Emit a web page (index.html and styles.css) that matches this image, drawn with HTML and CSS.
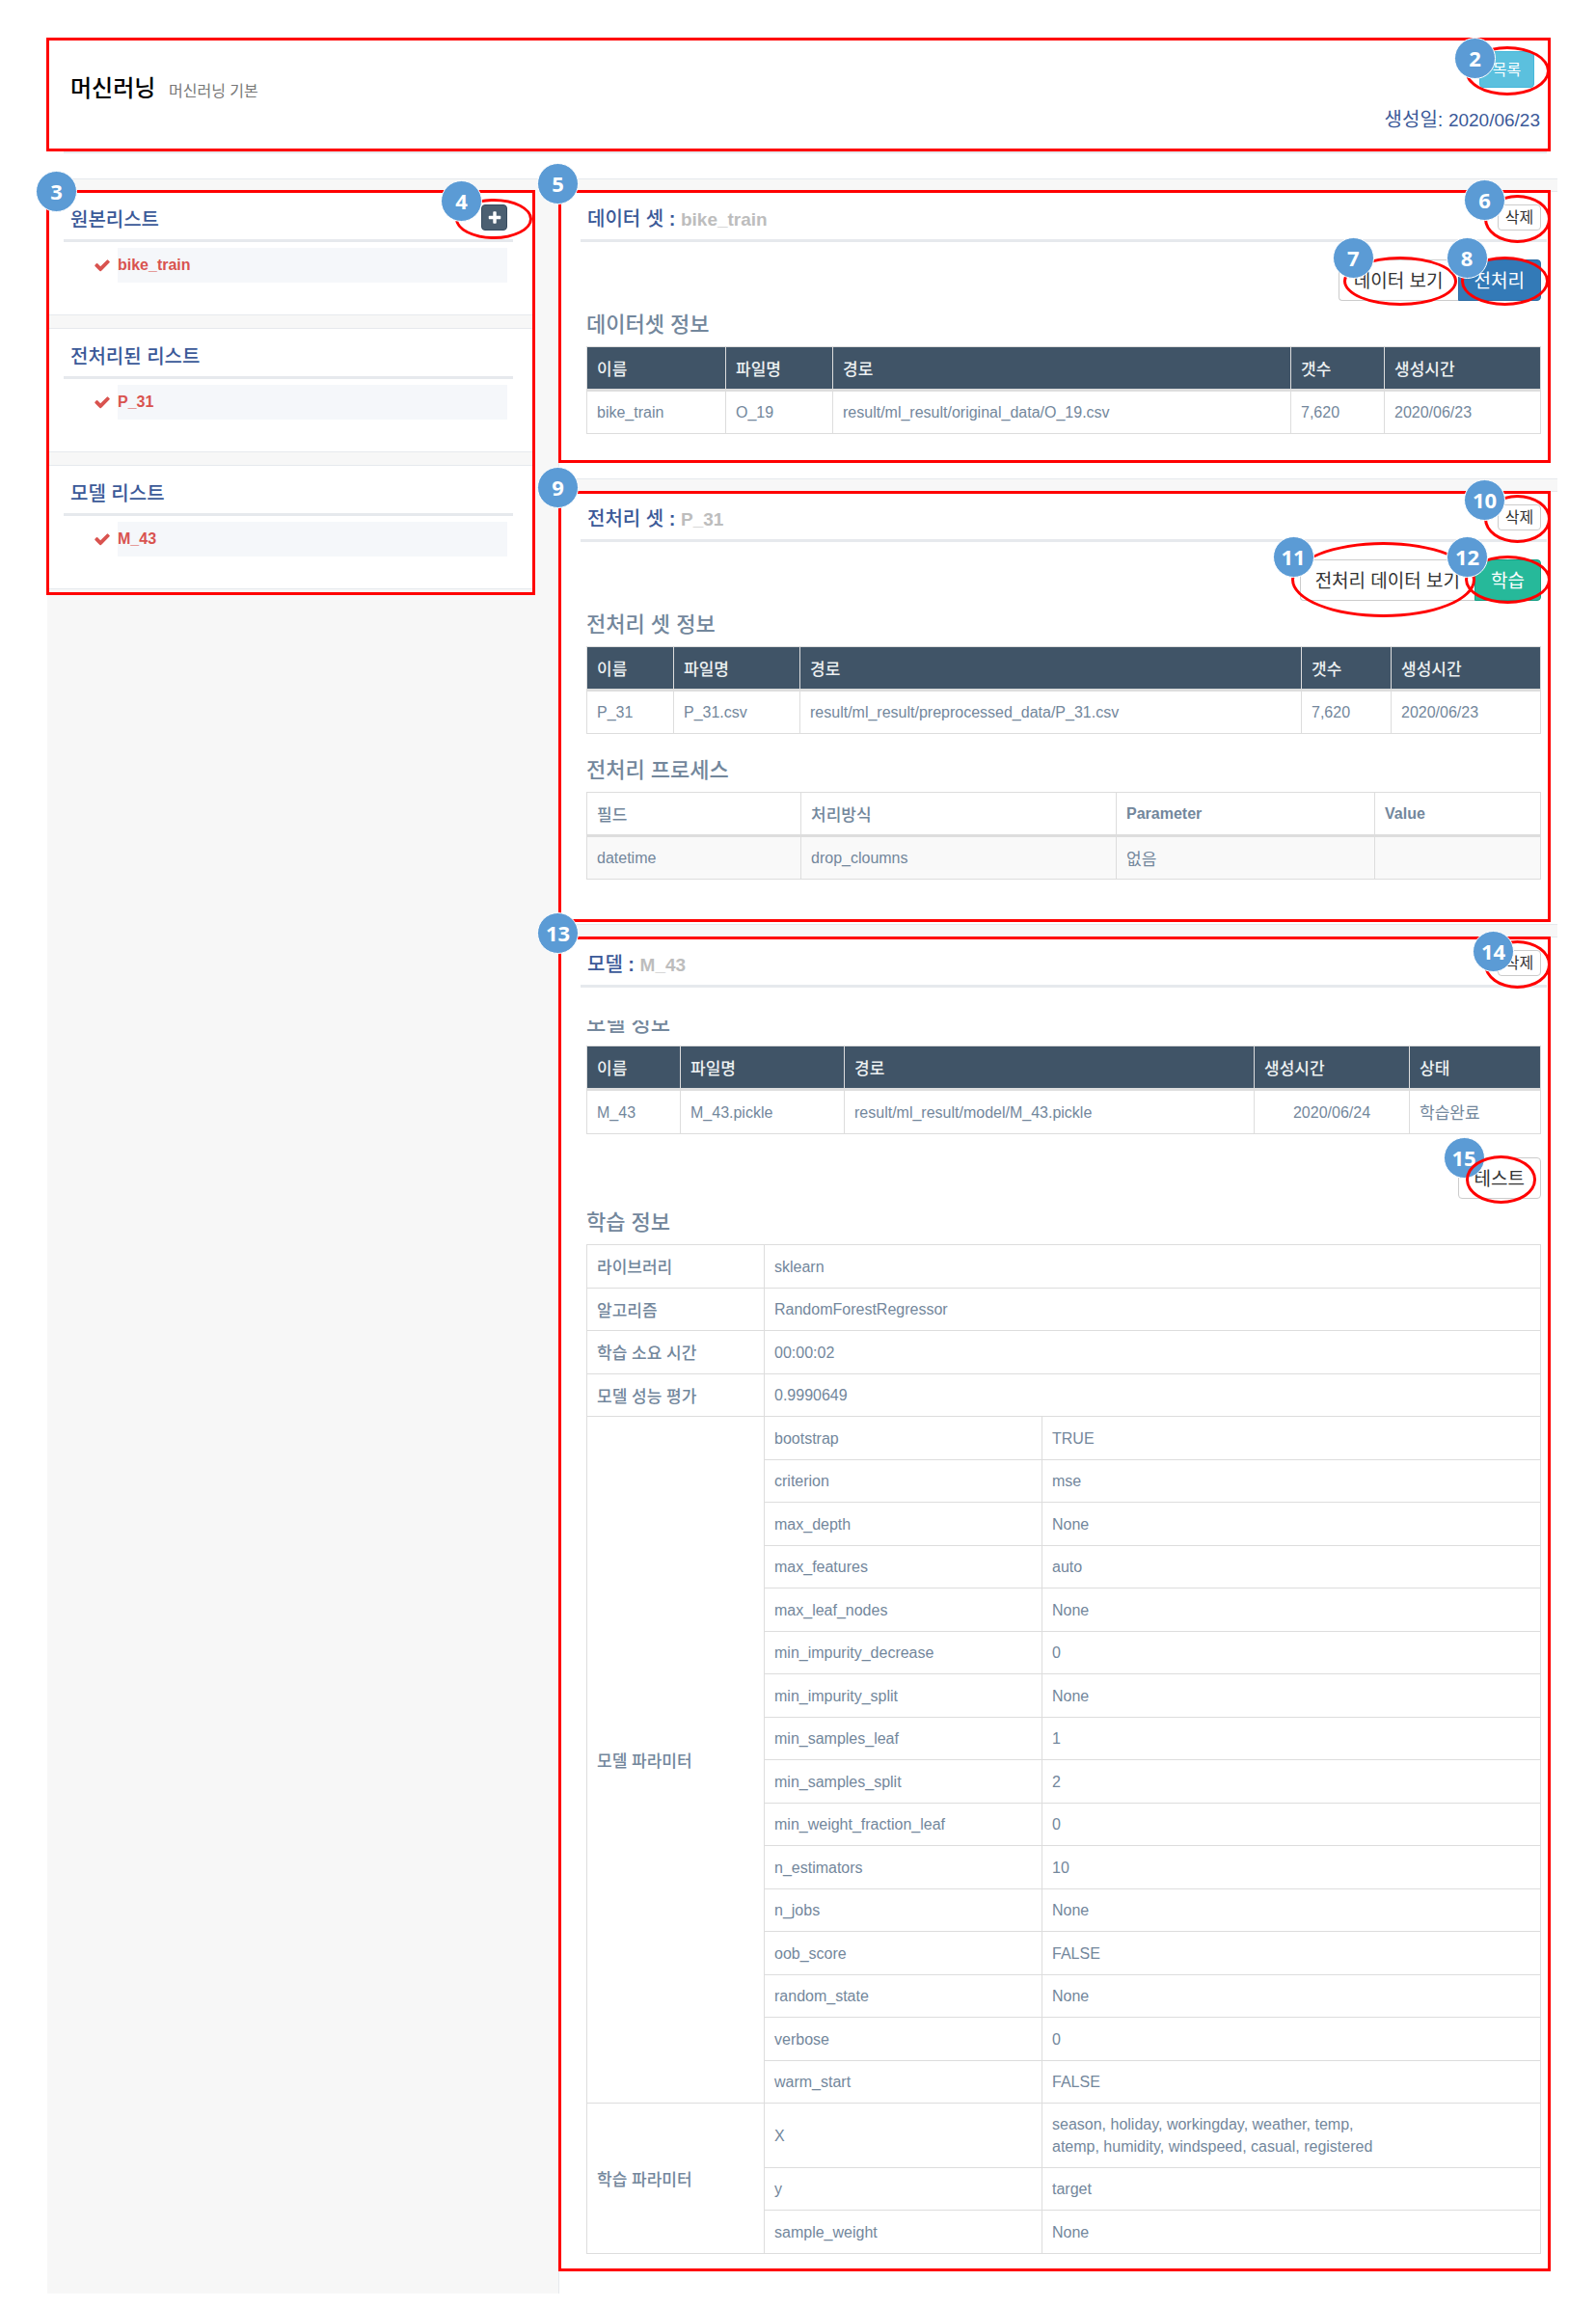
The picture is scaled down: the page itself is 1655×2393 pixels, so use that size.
FILE: index.html
```html
<!DOCTYPE html>
<html lang="ko">
<head>
<meta charset="utf-8">
<meta name="viewport" content="width=device-width, initial-scale=1">
<title>머신러닝</title>
<link rel="stylesheet" href="styles.css">
</head>
<body>
<div class="page">
  <header class="page-header">
    <div class="frame frame-header"></div>
    <div class="header-row">
      <h1 class="page-title">머신러닝 <small>머신러닝 기본</small></h1>
      <div class="header-side">
        <span class="mark mark-list">
          <button type="button" class="btn btn-info">목록</button>
          <span class="ring"></span><span class="badge">2</span>
        </span>
        <p class="created">생성일: <span class="created-date">2020/06/23</span></p>
      </div>
    </div>
  </header>

  <div class="columns">
    <aside class="sidebar">
      <div class="frame frame-sidebar"></div>
      <span class="badge badge-sidebar">3</span>
      <section class="panel side-panel">
        <div class="panel-head">
          <h2>원본리스트</h2>
          <span class="mark mark-add">
            <button type="button" class="btn btn-dark" aria-label="추가"><svg width="16" height="16" viewBox="0 0 1792 1792"><path fill="currentColor" d="M1600 736v192q0 40-28 68t-68 28h-416v416q0 40-28 68t-68 28h-192q-40 0-68-28t-28-68v-416h-416q-40 0-68-28t-28-68v-192q0-40 28-68t68-28h416v-416q0-40 28-68t68-28h192q40 0 68 28t28 68v416h416q40 0 68 28t28 68z"/></svg></button>
            <span class="ring"></span><span class="badge">4</span>
          </span>
        </div>
        <ul class="side-list">
          <li><svg width="18" height="18" viewBox="0 0 1792 1792"><path fill="currentColor" d="M1671 566q0 40-28 68l-724 724-136 136q-28 28-68 28t-68-28l-136-136-362-362q-28-28-28-68t28-68l136-136q28-28 68-28t68 28l294 295 656-657q28-28 68-28t68 28l136 136q28 28 28 68z"/></svg><a href="#dataset">bike_train</a></li>
        </ul>
      </section>
      <section class="panel side-panel">
        <div class="panel-head"><h2>전처리된 리스트</h2></div>
        <ul class="side-list">
          <li><svg width="18" height="18" viewBox="0 0 1792 1792"><path fill="currentColor" d="M1671 566q0 40-28 68l-724 724-136 136q-28 28-68 28t-68-28l-136-136-362-362q-28-28-28-68t28-68l136-136q28-28 68-28t68 28l294 295 656-657q28-28 68-28t68 28l136 136q28 28 28 68z"/></svg><a href="#preprocessed">P_31</a></li>
        </ul>
      </section>
      <section class="panel side-panel">
        <div class="panel-head"><h2>모델 리스트</h2></div>
        <ul class="side-list">
          <li><svg width="18" height="18" viewBox="0 0 1792 1792"><path fill="currentColor" d="M1671 566q0 40-28 68l-724 724-136 136q-28 28-68 28t-68-28l-136-136-362-362q-28-28-28-68t28-68l136-136q28-28 68-28t68 28l294 295 656-657q28-28 68-28t68 28l136 136q28 28 28 68z"/></svg><a href="#model">M_43</a></li>
        </ul>
      </section>
    </aside>

    <main class="content">
      <section class="panel main-panel" id="dataset">
        <div class="frame frame-dataset"></div>
        <span class="badge badge-panel badge-dataset">5</span>
        <div class="panel-head">
          <h2>데이터 셋 <b>:</b> <small>bike_train</small></h2>
          <span class="mark mark-delete">
            <button type="button" class="btn btn-default btn-small">삭제</button>
            <span class="ring"></span><span class="badge">6</span>
          </span>
        </div>
        <div class="panel-body">
          <div class="btn-group">
            <span class="mark mark-view">
              <button type="button" class="btn btn-default btn-large btn-first">데이터 보기</button>
              <span class="ring"></span><span class="badge">7</span>
            </span>
            <span class="mark mark-preprocess">
              <button type="button" class="btn btn-primary btn-large btn-last">전처리</button>
              <span class="ring"></span><span class="badge">8</span>
            </span>
          </div>
          <h3>데이터셋 정보</h3>
          <table class="dark-head">
            <colgroup><col class="w144"><col class="w111"><col><col class="w97"><col class="w162"></colgroup>
            <thead><tr><th scope="col">이름</th><th scope="col">파일명</th><th scope="col">경로</th><th scope="col">갯수</th><th scope="col">생성시간</th></tr></thead>
            <tbody><tr><td>bike_train</td><td>O_19</td><td>result/ml_result/original_data/O_19.csv</td><td>7,620</td><td>2020/06/23</td></tr></tbody>
          </table>
        </div>
      </section>

      <section class="panel main-panel" id="preprocessed">
        <div class="frame frame-preprocessed"></div>
        <span class="badge badge-panel">9</span>
        <div class="panel-head">
          <h2>전처리 셋 <b>:</b> <small>P_31</small></h2>
          <span class="mark mark-delete">
            <button type="button" class="btn btn-default btn-small">삭제</button>
            <span class="ring"></span><span class="badge">10</span>
          </span>
        </div>
        <div class="panel-body">
          <div class="btn-group">
            <span class="mark mark-view-pre">
              <button type="button" class="btn btn-default btn-large btn-first">전처리 데이터 보기</button>
              <span class="ring"></span><span class="badge">11</span>
            </span>
            <span class="mark mark-train">
              <button type="button" class="btn btn-success btn-large btn-last">학습</button>
              <span class="ring"></span><span class="badge">12</span>
            </span>
          </div>
          <h3>전처리 셋 정보</h3>
          <table class="dark-head">
            <colgroup><col class="w90"><col class="w131"><col><col class="w93"><col class="w155"></colgroup>
            <thead><tr><th scope="col">이름</th><th scope="col">파일명</th><th scope="col">경로</th><th scope="col">갯수</th><th scope="col">생성시간</th></tr></thead>
            <tbody><tr><td>P_31</td><td>P_31.csv</td><td>result/ml_result/preprocessed_data/P_31.csv</td><td>7,620</td><td>2020/06/23</td></tr></tbody>
          </table>
          <h3 class="next-title">전처리 프로세스</h3>
          <table class="striped">
            <colgroup><col class="w222"><col class="w327"><col><col class="w172"></colgroup>
            <thead><tr><th scope="col">필드</th><th scope="col">처리방식</th><th scope="col" class="latin">Parameter</th><th scope="col" class="latin">Value</th></tr></thead>
            <tbody><tr><td>datetime</td><td>drop_cloumns</td><td class="hangul">없음</td><td></td></tr></tbody>
          </table>
        </div>
      </section>

      <section class="panel main-panel" id="model">
        <div class="frame frame-model"></div>
        <span class="badge badge-panel">13</span>
        <div class="panel-head">
          <h2>모델 <b>:</b> <small>M_43</small></h2>
          <span class="mark mark-delete mark-delete-model">
            <button type="button" class="btn btn-default btn-small">삭제</button>
            <span class="ring"></span><span class="badge">14</span>
          </span>
        </div>
        <div class="panel-body">
          <div class="scroll-area">
            <h3>모델 정보</h3>
            <table class="dark-head">
              <colgroup><col class="w97"><col class="w170"><col><col class="w161"><col class="w136"></colgroup>
              <thead><tr><th scope="col">이름</th><th scope="col">파일명</th><th scope="col">경로</th><th scope="col">생성시간</th><th scope="col">상태</th></tr></thead>
              <tbody><tr><td>M_43</td><td>M_43.pickle</td><td>result/ml_result/model/M_43.pickle</td><td class="centered">2020/06/24</td><td class="hangul">학습완료</td></tr></tbody>
            </table>
          </div>
          <div class="btn-group btn-group-test">
            <span class="mark mark-test">
              <button type="button" class="btn btn-default btn-large">테스트</button>
              <span class="ring"></span><span class="badge">15</span>
            </span>
          </div>
          <h3>학습 정보</h3>
          <table class="detail">
            <colgroup><col class="w184"><col class="w288"><col></colgroup>
            <tbody>
              <tr><th scope="row">라이브러리</th><td colspan="2">sklearn</td></tr>
              <tr><th scope="row">알고리즘</th><td colspan="2">RandomForestRegressor</td></tr>
              <tr><th scope="row">학습 소요 시간</th><td colspan="2">00:00:02</td></tr>
              <tr><th scope="row">모델 성능 평가</th><td colspan="2">0.9990649</td></tr>
              <tr><th scope="row" rowspan="16">모델 파라미터</th><td>bootstrap</td><td>TRUE</td></tr>
              <tr><td>criterion</td><td>mse</td></tr>
              <tr><td>max_depth</td><td>None</td></tr>
              <tr><td>max_features</td><td>auto</td></tr>
              <tr><td>max_leaf_nodes</td><td>None</td></tr>
              <tr><td>min_impurity_decrease</td><td>0</td></tr>
              <tr><td>min_impurity_split</td><td>None</td></tr>
              <tr><td>min_samples_leaf</td><td>1</td></tr>
              <tr><td>min_samples_split</td><td>2</td></tr>
              <tr><td>min_weight_fraction_leaf</td><td>0</td></tr>
              <tr><td>n_estimators</td><td>10</td></tr>
              <tr><td>n_jobs</td><td>None</td></tr>
              <tr><td>oob_score</td><td>FALSE</td></tr>
              <tr><td>random_state</td><td>None</td></tr>
              <tr><td>verbose</td><td>0</td></tr>
              <tr><td>warm_start</td><td>FALSE</td></tr>
              <tr class="tall"><th scope="row" rowspan="3">학습 파라미터</th><td>X</td><td>season, holiday, workingday, weather, temp,<br>atemp, humidity, windspeed, casual, registered</td></tr>
              <tr><td>y</td><td>target</td></tr>
              <tr><td>sample_weight</td><td>None</td></tr>
            </tbody>
          </table>
        </div>
      </section>
    </main>
  </div>
</div>
</body>
</html>
```
FILE: styles.css
```css
*, *::before, *::after { box-sizing: border-box; }

body {
  margin: 0;
  background: #fff;
  color: #73879c;
  font-family: "Liberation Sans", "Noto Sans CJK KR", sans-serif;
  font-size: 16px;
  line-height: 23px;
}

h1, h2, h3, p, ul { margin: 0; padding: 0; }

.page {
  margin: 39px 40px 15px 49px;
  background: #f7f7f7;
}

/* Header */
.page-header {
  position: relative;
  padding: 0 11px 26px 17px;
  background: #fff;
  border-bottom: 1px solid #e6e9ed;
}

.header-row {
  display: flex;
  justify-content: space-between;
  min-height: 120px;
  padding: 0 7px;
  border-bottom: 2px solid #e6e9ed;
}

.page-title {
  padding-top: 35px;
  color: #000;
  font-size: 24px;
  font-weight: 500;
  line-height: 36px;
}

.page-title small {
  margin-left: 7px;
  color: #777;
  font-size: 16px;
  font-weight: 400;
}

.header-side {
  display: flex;
  flex-direction: column;
  align-items: flex-end;
  gap: 19px;
  padding-top: 14px;
}

.created {
  color: #3b5998;
  font-size: 20px;
  line-height: 28px;
}

.created-date { font-size: 19px; }

/* Columns */
.columns {
  display: grid;
  grid-template-columns: minmax(0, 506fr) minmax(0, 1036fr);
  gap: 24px;
  padding-top: 12px;
}

.sidebar {
  position: relative;
  display: flex;
  flex-direction: column;
  gap: 13px;
  align-self: start;
}

.content {
  display: flex;
  flex-direction: column;
  gap: 12px;
}

.panel {
  position: relative;
  background: #fff;
  border: 1px solid #e6e9ed;
}

.side-panel { padding: 0 22px 33px 16px; }
.main-panel { padding: 0 11px 46px 22px; border-right: 0; }
#model { padding-bottom: 41px; border-bottom: 0; }

.panel-head {
  display: flex;
  align-items: center;
  justify-content: space-between;
  height: 52px;
  padding: 4px 6px 0 7px;
  border-bottom: 3px solid #e6e9ed;
}

.panel-head h2 {
  padding-top: 4px;
  color: #3b5998;
  font-size: 20px;
  font-weight: 500;
  line-height: 28px;
}

.panel-head small {
  color: #bdbdbd;
  font-size: 19px;
  font-weight: 700;
}

.panel-body { padding: 18px 6px 0; }

h3 {
  height: 47px;
  font-size: 22px;
  font-weight: 500;
  line-height: 49px;
}

.next-title { margin-top: 13px; }

/* Sidebar lists */
.side-list {
  margin-top: 6px;
  list-style: none;
}

.side-list li {
  display: flex;
  align-items: center;
  gap: 7px;
  padding: 0 6px 0 31px;
  color: #d9534f;
}

.side-list svg { flex: none; }

.side-list a {
  flex: 1;
  height: 36px;
  background: #f5f7fa;
  color: #d9534f;
  font-weight: 700;
  line-height: 36px;
  text-decoration: none;
}

/* Buttons */
.btn {
  display: inline-flex;
  align-items: center;
  justify-content: center;
  padding: 0;
  border: 1px solid;
  border-radius: 4px;
  font-family: inherit;
  font-size: 16px;
  line-height: 23px;
  white-space: nowrap;
}

.btn-default { background: #fff; border-color: #ccc; color: #333; }
.btn-primary { background: #337ab7; border-color: #2e6da4; color: #fff; }
.btn-success { background: #26b99a; border-color: #169f85; color: #fff; }
.btn-info { width: 57px; height: 38px; background: #5bc0de; border-color: #46b8da; color: #fff; }
.btn-dark { width: 27px; height: 27px; background: #4b5f71; border-color: #364b5f; color: #fff; }
.btn-small { width: 45px; height: 27px; }
.btn-large { height: 43px; padding: 2px 16px 0; font-size: 19px; }
.btn-first { padding: 2px 15px 0; border-radius: 4px 0 0 4px; border-right: 0; }
.btn-last { border-radius: 0 4px 4px 0; }

.btn-group {
  display: flex;
  justify-content: flex-end;
}

.btn-group-test { margin-top: 24px; }

/* Callouts: red frames, red rings and numbered badges */
.frame {
  position: absolute;
  z-index: 1;
  border: 3px solid #f00;
  pointer-events: none;
}

.frame-header { top: 0; right: 7px; bottom: 28px; left: -1px; }
.frame-sidebar { top: -1px; right: 0; bottom: -6px; left: -1px; }
.frame-dataset { top: -2px; right: 7px; bottom: 16px; left: -1px; }
.frame-preprocessed { top: -1px; right: 7px; bottom: 2px; left: -1px; }
.frame-model { top: -1px; right: 7px; bottom: 23px; left: -1px; }

.mark {
  position: relative;
  display: inline-flex;
}

.ring {
  position: absolute;
  z-index: 2;
  border: 3px solid #f00;
  border-radius: 50%;
  pointer-events: none;
}

.badge {
  position: absolute;
  z-index: 3;
  width: 43px;
  height: 43px;
  border: 1px solid #fff;
  border-radius: 50%;
  background: #5b9bd5;
  color: #fff;
  font-family: "Open Sans", "Noto Sans", sans-serif;
  font-size: 22px;
  font-weight: 700;
  line-height: 41px;
  text-align: center;
  pointer-events: none;
}

.badge-sidebar { top: -21px; left: -12px; }
.badge-panel { top: -26px; left: -23px; }
.badge-dataset { top: -30px; }

.mark-list { margin-right: 6px; }
.mark-list .ring { inset: -5px -16px -8px -15px; }
.mark-list .badge { top: -14px; left: -26px; }

.mark-add .ring { inset: -6px -26px -9px -27px; }
.mark-add .badge { top: -25px; left: -42px; }

.mark-delete .ring { inset: -10px -10px -13px -14px; }
.mark-delete .badge { top: -26px; left: -35px; }
.mark-delete-model .badge { top: -20px; left: -26px; }

.mark-view .ring { inset: -3px 1px -5px 5px; }
.mark-view .badge { top: -23px; left: -6px; }

.mark-preprocess .ring { inset: -3px -8px -5px 3px; }
.mark-preprocess .badge { top: -23px; left: -12px; }

.mark-view-pre .ring { inset: -18px -1px -17px -9px; }
.mark-view-pre .badge { top: -24px; left: -28px; }

.mark-train .ring { inset: -4px -10px -3px -10px; }
.mark-train .badge { top: -24px; left: -29px; }

.mark-test .ring { inset: -2px 5px -5px 8px; z-index: 4; }
.mark-test .badge { top: -21px; left: -15px; }

/* Tables */
table {
  width: 100%;
  table-layout: fixed;
  border-collapse: separate;
  border-spacing: 0;
  border: solid #ddd;
  border-width: 1px 0 0 1px;
}

th, td {
  height: 44px;
  padding: 0 10px;
  border: solid #ddd;
  border-width: 0 1px 1px 0;
  text-align: left;
  vertical-align: middle;
}

th { padding-top: 3px; font-size: 17px; font-weight: 500; }
thead th { height: 46px; border-bottom-width: 3px; }
th.latin { padding-top: 0; font-size: 16px; font-weight: 700; }
td.hangul { padding-top: 3px; font-size: 17px; }
td.centered { text-align: center; }

.dark-head thead th { background: #405467; color: #ecf0f1; }
.striped tbody td { background: #f9f9f9; }
.detail tr:nth-child(odd) td { height: 45px; }
.detail tr:nth-child(even) td { height: 44px; }
.detail tr.tall td { height: 67px; }

/* The model table sits in an area whose top edge cuts into its heading. */
.scroll-area {
  margin-top: 16px;
  overflow: hidden;
}

.scroll-area h3 { margin-top: -21px; }
.scroll-area td { height: 45px; }

.w90 { width: 90px; }
.w93 { width: 93px; }
.w97 { width: 97px; }
.w111 { width: 111px; }
.w131 { width: 131px; }
.w136 { width: 136px; }
.w144 { width: 144px; }
.w155 { width: 155px; }
.w161 { width: 161px; }
.w162 { width: 162px; }
.w170 { width: 170px; }
.w172 { width: 172px; }
.w184 { width: 184px; }
.w222 { width: 222px; }
.w288 { width: 288px; }
.w327 { width: 327px; }
```
